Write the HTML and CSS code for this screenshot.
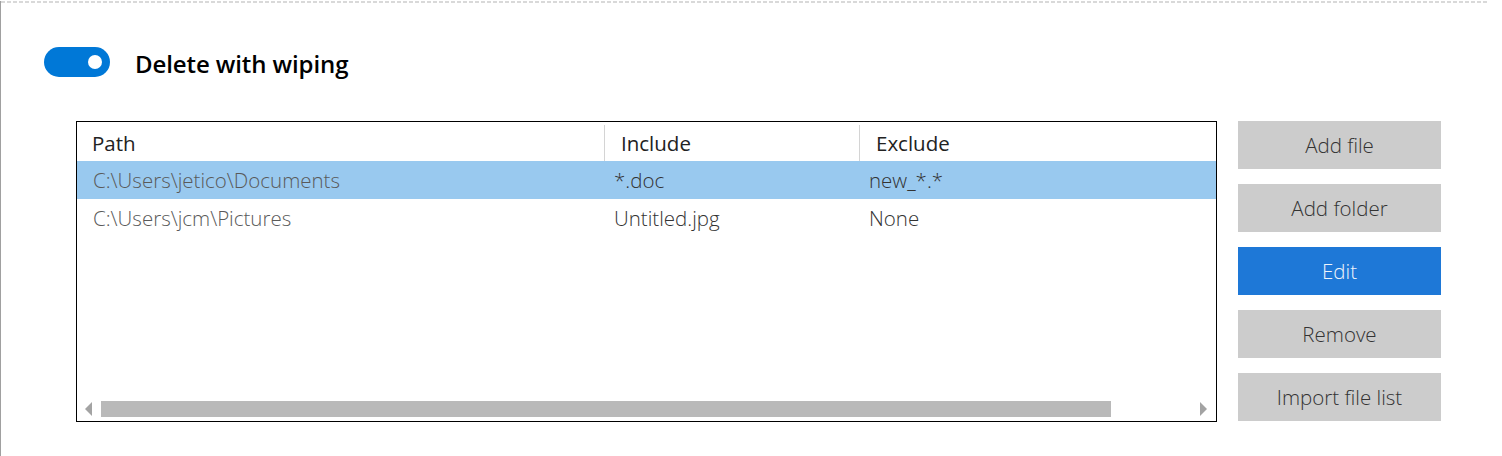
FILE: index.html
```html
<!DOCTYPE html>
<html>
<head>
<meta charset="utf-8">
<link rel="stylesheet" href="styles.css">
</head>
<body>
<div class="frame">
  <div class="dash-line"></div>
  <div class="heading">
    <div class="toggle"><span class="knob"></span></div>
    <span class="heading-text">Delete with wiping</span>
  </div>
  <div class="main">
    <div class="table">
      <div class="grid">
        <div class="hcell first">Path</div>
        <div class="hcell">Include</div>
        <div class="hcell">Exclude</div>
        <div class="cell path selected">C:\Users\jetico\Documents</div>
        <div class="cell selected">*.doc</div>
        <div class="cell selected">new_*.*</div>
        <div class="cell path">C:\Users\jcm\Pictures</div>
        <div class="cell">Untitled.jpg</div>
        <div class="cell">None</div>
      </div>
      <div class="scrollbar">
        <span class="arrow-left"></span>
        <span class="thumb"></span>
        <span class="spacer"></span>
        <span class="arrow-right"></span>
      </div>
    </div>
    <div class="buttons">
      <div class="btn">Add file</div>
      <div class="btn">Add folder</div>
      <div class="btn primary">Edit</div>
      <div class="btn">Remove</div>
      <div class="btn">Import file list</div>
    </div>
  </div>
</div>
</body>
</html>
```

FILE: styles.css
```css
html, body {
  margin: 0;
  padding: 0;
  background: #ffffff;
}

.frame {
  width: 1502px;
  height: 456px;
  box-sizing: border-box;
  border-left: 1px solid #a0a0a0;
  font-family: "Open Sans", "Noto Sans", sans-serif;
  color: #333333;
}

.dash-line {
  width: 1486px;
  height: 2px;
  margin-top: 1px;
  background: repeating-linear-gradient(to right, #d9d9d9 0 4px, transparent 4px 6px);
}

.heading {
  display: flex;
  align-items: center;
  margin-top: 44px;
  padding-left: 43px;
  height: 30px;
}

.toggle {
  width: 66px;
  height: 30px;
  border-radius: 15px;
  background: #0078d7;
  display: flex;
  align-items: center;
  justify-content: flex-end;
  padding-right: 8px;
  box-sizing: border-box;
}

.knob {
  width: 14px;
  height: 14px;
  border-radius: 50%;
  background: #ffffff;
}

.heading-text {
  margin-left: 25px;
  font-size: 24px;
  font-weight: 600;
  color: #000000;
  letter-spacing: -0.1px;
  padding-top: 2px;
}

.main {
  display: flex;
  gap: 21px;
  margin-top: 44px;
  padding-left: 75px;
}

.table {
  width: 1141px;
  height: 301px;
  box-sizing: border-box;
  border: 1px solid #000000;
  display: flex;
  flex-direction: column;
}

.grid {
  flex: 1;
  display: grid;
  grid-template-columns: 527px 255px 1fr;
  grid-template-rows: 39px;
  grid-auto-rows: 38px;
  align-content: start;
}

.hcell {
  align-self: end;
  height: 36px;
  box-sizing: border-box;
  border-left: 1px solid #d4d4d4;
  padding-left: 16px;
  font-size: 20.5px;
  font-weight: 400;
  color: #222222;
  display: flex;
  align-items: center;
}

.hcell.first {
  border-left: none;
  padding-left: 15px;
}

.cell {
  display: flex;
  align-items: center;
  padding-left: 10px;
  font-size: 20.5px;
  font-weight: 300;
  color: #333333;
  padding-bottom: 1px;
}

.cell.path {
  padding-left: 16px;
  color: #5a5a5a;
}

.cell.selected {
  background: #99c9ef;
}

.scrollbar {
  height: 17px;
  margin-bottom: 3px;
  display: flex;
  align-items: flex-start;
  padding-left: 8px;
  padding-right: 9px;
}

.arrow-left {
  width: 0;
  height: 0;
  margin-top: 1px;
  border-top: 7px solid transparent;
  border-bottom: 7px solid transparent;
  border-right: 7px solid #a3a3a3;
}

.thumb {
  margin-left: 9px;
  width: 1010px;
  height: 16px;
  background: #b9b9b9;
}

.spacer {
  flex: 1;
}

.arrow-right {
  width: 0;
  height: 0;
  margin-top: 1px;
  border-top: 7px solid transparent;
  border-bottom: 7px solid transparent;
  border-left: 7px solid #a3a3a3;
}

.buttons {
  display: flex;
  flex-direction: column;
  gap: 15px;
  width: 203px;
}

.btn {
  height: 48px;
  background: #cccccc;
  display: flex;
  align-items: center;
  justify-content: center;
  font-size: 20.5px;
  font-weight: 300;
  color: #333333;
  padding-bottom: 1px;
  box-sizing: border-box;
}

.btn.primary {
  background: #1e78d7;
  color: #eef4fb;
}
```
